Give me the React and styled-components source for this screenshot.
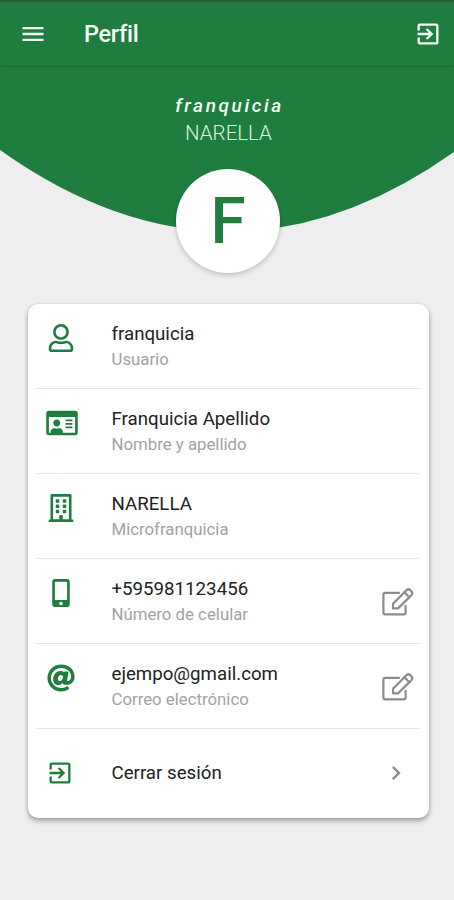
import React from "react";
import styled, { createGlobalStyle } from "styled-components";
import {
  FaAt,
  FaMobileAlt,
  FaRegBuilding,
  FaRegIdCard,
  FaRegUser,
} from "react-icons/fa";
import { MdChevronRight, MdExitToApp, MdMenu } from "react-icons/md";

const GREEN = "#1f7e3f";

const GlobalStyle = createGlobalStyle`
  * {
    box-sizing: border-box;
  }
  body {
    margin: 0;
    background-color: #eeeeee;
    font-family: Roboto, "Liberation Sans", sans-serif;
  }
`;

const Screen = styled.div`
  height: 900px;
  display: flex;
  flex-direction: column;
  background-color: #eeeeee;
  overflow: hidden;
`;

const AppBar = styled.header`
  height: 65px;
  flex-shrink: 0;
  display: flex;
  align-items: center;
  padding: 1px 12px 0 19px;
  border-top: 2px solid #245b34;
  background-color: ${GREEN};
  color: #f3fff5;
  box-shadow: 0 1px 4px rgba(0, 0, 0, 0.2);
  z-index: 1;
`;

const BarButton = styled.button`
  display: flex;
  padding: 0;
  border: none;
  background: none;
  color: inherit;
  font-size: 28px;
`;

const BarTitle = styled.h1`
  flex: 1;
  margin: 0 0 0 37px;
  font-size: 23.5px;
  font-weight: 500;
  letter-spacing: -0.3px;
`;

const Hero = styled.section`
  height: 171px;
  flex-shrink: 0;
  display: flex;
  flex-direction: column;
  align-items: center;
  padding: 28px 0 0 3px;
  background-color: ${GREEN};
  /* curved bottom edge */
  clip-path: path("M0 0H454V87Q228 247 0 85Z");
`;

const HeroUser = styled.div`
  padding-left: 2px;
  font-size: 19px;
  line-height: 26px;
  font-weight: 500;
  font-style: italic;
  letter-spacing: 2.6px;
  color: #f3fff5;
`;

const HeroBranch = styled.div`
  font-size: 20.5px;
  line-height: 29px;
  font-weight: 300;
  color: #d9f3de;
`;

const Avatar = styled.div`
  width: 104px;
  height: 104px;
  flex-shrink: 0;
  margin: -67px 0 0 176px;
  display: flex;
  align-items: center;
  justify-content: center;
  border-radius: 50%;
  background-color: #fff;
  color: ${GREEN};
  font-size: 64px;
  font-weight: 500;
  box-shadow: 0 2px 5px rgba(0, 0, 0, 0.2);
  z-index: 1;
`;

const Card = styled.ul`
  width: 401px;
  height: 514px;
  margin: 31px 0 0 28px;
  padding: 0 9px;
  list-style: none;
  border-radius: 10px;
  background-color: #fff;
  box-shadow: 0 3px 5px rgba(0, 0, 0, 0.32), 0 0 3px rgba(0, 0, 0, 0.1);
`;

const Row = styled.li`
  height: ${({ last }) => (last ? "87px" : "85px")};
  display: flex;
  align-items: ${({ last }) => (last ? "center" : "flex-start")};
  border-bottom: ${({ last }) => (last ? "none" : "1.5px solid #e6e6e6")};
`;

const RowIcon = styled.div`
  width: 74px;
  padding: ${({ last }) => (last ? "0 0 0 9px" : "20px 0 0 7.5px")};
  display: flex;
  color: ${GREEN};

  svg {
    width: ${({ last }) => (last ? "28px" : "32px")};
    height: 28px;
  }
`;

/* wider than the other glyphs, so it starts a little further in */
const IdCard = styled(FaRegIdCard)`
  margin-left: 1.5px;
`;

const RowText = styled.div`
  flex: 1;
  padding-top: ${({ last }) => (last ? "0" : "17px")};
`;

const Value = styled.div`
  margin-left: 0.5px;
  font-size: 18.7px;
  line-height: 26px;
  color: #222;
`;

const Caption = styled.div`
  margin: -1px 0 0 0.5px;
  font-size: 16.8px;
  line-height: 26px;
  color: #a3a3a3;
`;

const EditSvg = styled.svg`
  width: 32px;
  height: 30px;
  margin: 28px 6px 0 0;
  fill: none;
  stroke: #8c8c8c;
  stroke-width: 2.2;
  stroke-linecap: round;
  stroke-linejoin: round;
`;

const Arrow = styled(MdChevronRight)`
  width: 28px;
  height: 28px;
  margin-right: 10px;
  color: #8c8c8c;
`;

const EditIcon = () => (
  <EditSvg viewBox="0 0 32 30">
    <path d="M17 5.8H3.2Q1.4 5.8 1.4 7.6V25.6Q1.4 27.4 3.2 27.4H21.8Q23.6 27.4 23.6 25.6V18.8" />
    <path d="M11 21.4V16.8L24.4 3.2Q26.4 1.3 28.4 3.2L29.4 4.2Q31.2 6.2 29.4 8.2L16 21.4Z" />
    <path d="M22.4 5.3L27.4 10.2" />
  </EditSvg>
);

const fields = [
  { icon: FaRegUser, value: "franquicia", caption: "Usuario" },
  {
    icon: IdCard,
    value: "Franquicia Apellido",
    caption: "Nombre y apellido",
  },
  { icon: FaRegBuilding, value: "NARELLA", caption: "Microfranquicia" },
  {
    icon: FaMobileAlt,
    value: "+595981123456",
    caption: "Número de celular",
    editable: true,
  },
  {
    icon: FaAt,
    value: "ejempo@gmail.com",
    caption: "Correo electrónico",
    editable: true,
  },
];

export default function App() {
  return (
    <>
      <GlobalStyle />
      <Screen>
        <AppBar>
          <BarButton>
            <MdMenu />
          </BarButton>
          <BarTitle>Perfil</BarTitle>
          <BarButton>
            <MdExitToApp />
          </BarButton>
        </AppBar>
        <Hero>
          <HeroUser>franquicia</HeroUser>
          <HeroBranch>NARELLA</HeroBranch>
        </Hero>
        <Avatar>F</Avatar>
        <Card>
          {fields.map(({ icon: Icon, value, caption, editable }) => (
            <Row key={caption}>
              <RowIcon>
                <Icon />
              </RowIcon>
              <RowText>
                <Value>{value}</Value>
                <Caption>{caption}</Caption>
              </RowText>
              {editable && <EditIcon />}
            </Row>
          ))}
          <Row last>
            <RowIcon last>
              <MdExitToApp />
            </RowIcon>
            <RowText last>
              <Value>Cerrar sesión</Value>
            </RowText>
            <Arrow />
          </Row>
        </Card>
      </Screen>
    </>
  );
}
